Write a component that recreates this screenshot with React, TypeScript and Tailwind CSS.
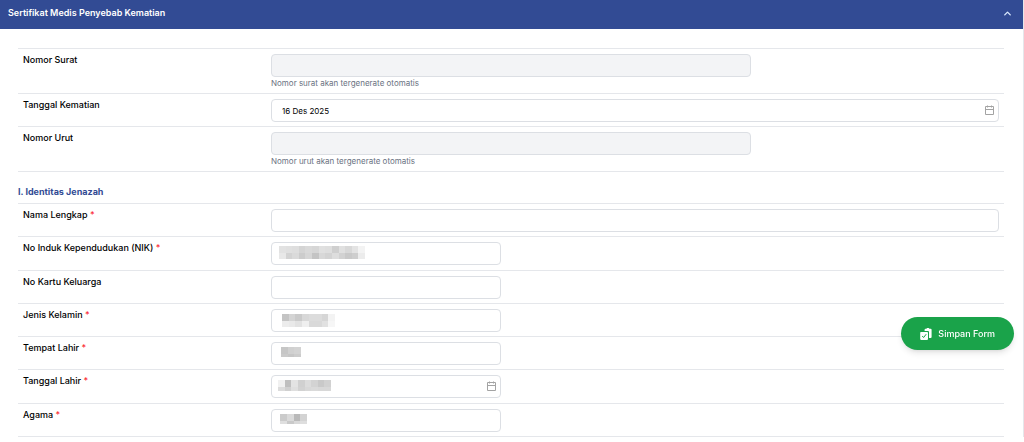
import { useState } from "react";
import { ChevronUp } from "lucide-react";

type Mosaic = { left: number; top: number; width: number; height: number; rows: string[][] };

type Field = {
  id: string;
  label: string;
  required?: boolean;
  date?: boolean;
  value?: string;
  mosaic?: Mosaic;
};

const identityFields: Field[] = [
  {
    id: "nik",
    label: "No Induk Kependudukan (NIK)",
    required: true,
    mosaic: {
      left: 8,
      top: 4,
      width: 86,
      height: 13,
      rows: [
        ["#e2e2e2", "#e0e0e0", "#dedede", "#d4d4d4", "#d9d9d9", "#d6d6d6", "#e0e0e0", "#dedede", "#cfcfcf", "#e0e0e0", "#d8d8d8", "#e3e3e3", "#f3f3f3"],
        ["#e8e8e8", "#d3d3d3", "#dadada", "#cccccc", "#d6d6d6", "#c4c4c4", "#d8d8d8", "#d3d3d3", "#dddddd", "#d2d2d2", "#c9c9c9", "#cecece", "#ececec"],
      ],
    },
  },
  { id: "kk", label: "No Kartu Keluarga" },
  {
    id: "kelamin",
    label: "Jenis Kelamin",
    required: true,
    mosaic: {
      left: 11,
      top: 5,
      width: 53,
      height: 13,
      rows: [
        ["#c4c4c4", "#d4d4d4", "#cacaca", "#d8d8d8", "#dcdcdc", "#dcdcdc", "#d6d6d6", "#f3f3f3"],
        ["#ececec", "#e9e9e9", "#e2e2e2", "#efefef", "#d9d9d9", "#d9d9d9", "#e1e1e1", "#f6f6f6"],
      ],
    },
  },
  {
    id: "tempat",
    label: "Tempat Lahir",
    required: true,
    mosaic: {
      left: 10,
      top: 5,
      width: 20,
      height: 10,
      rows: [
        ["#c6c6c6", "#d0d0d0", "#d3d3d3"],
        ["#cacaca", "#c6c6c6", "#cccccc"],
      ],
    },
  },
  {
    id: "tgl-lahir",
    label: "Tanggal Lahir",
    required: true,
    date: true,
    mosaic: {
      left: 7,
      top: 5,
      width: 53,
      height: 11,
      rows: [
        ["#f1f1f1", "#bfbfbf", "#e3e3e3", "#d0d0d0", "#dcdcdc", "#d3d3d3", "#c9c9c9", "#d1d1d1"],
        ["#dcdcdc", "#d0d0d0", "#dfdfdf", "#d2d2d2", "#d8d8d8", "#dadada", "#d8d8d8", "#d8d8d8"],
      ],
    },
  },
  {
    id: "agama",
    label: "Agama",
    required: true,
    mosaic: {
      left: 9,
      top: 5,
      width: 27,
      height: 10,
      rows: [
        ["#cbcbcb", "#dadada", "#b9b9b9", "#d3d3d3"],
        ["#dfdfdf", "#c9c9c9", "#d9d9d9", "#dedede"],
      ],
    },
  },
];

const inputClass =
  "block h-[23px] w-full rounded border border-[#dcdfe4] bg-white px-2.5 text-[8px] text-black outline-none focus:border-blue-400 disabled:bg-gray-100";

function CalendarIcon() {
  return (
    <svg
      className="pointer-events-none absolute top-1.5 right-1 size-[11px]"
      viewBox="0 0 11 11"
      fill="none"
      stroke="#a3a3a3"
      aria-hidden="true"
    >
      <path d="M1.5 1.5h8v8h-8zM1.5 4.5h8M3.5 0.5v2M7.5 0.5v2" />
    </svg>
  );
}

// masks a personal value; the last row of cells may be cut by the height
function MosaicBlock({ mosaic }: { mosaic: Mosaic }) {
  const { left, top, width, height, rows } = mosaic;
  const cols = rows[0].length;
  return (
    <svg
      className="pointer-events-none absolute"
      style={{ left, top, width, height }}
      viewBox={`0 0 ${cols} ${(cols * height) / width}`}
      shapeRendering="crispEdges"
      aria-hidden="true"
    >
      {rows.map((row, y) =>
        row.map((color, x) => <rect key={`${x}-${y}`} x={x} y={y} width="1" height="1" fill={color} />)
      )}
    </svg>
  );
}

function Row({ field, wide }: { field: Field; wide?: boolean }) {
  return (
    <div className="grid grid-cols-[253px_1fr] items-start border-b border-gray-200 pt-[5px] pr-[5px] pb-1">
      <label htmlFor={field.id} className="pl-[5px] text-[9px] leading-3 font-medium text-black">
        {field.label}
        {field.required && <span className="text-red-500"> *</span>}
      </label>
      <div className={wide ? "relative" : "relative w-[31.6%]"}>
        <input id={field.id} type="text" defaultValue={field.value} className={inputClass} />
        {field.mosaic && <MosaicBlock mosaic={field.mosaic} />}
        {field.date && <CalendarIcon />}
      </div>
    </div>
  );
}

function GeneratedRow({ id, label, hint }: { id: string; label: string; hint: string }) {
  return (
    <div className="grid grid-cols-[253px_1fr] items-start border-b border-gray-200 pt-[5px] pr-[5px] pb-[5px]">
      <label htmlFor={id} className="pl-[5px] text-[9px] leading-3 font-medium text-black">
        {label}
      </label>
      <div className="w-[66%]">
        <input id={id} type="text" disabled className={inputClass} />
        <p className="pt-px text-[8px] leading-[10px] text-gray-500">{hint}</p>
      </div>
    </div>
  );
}

export default function App() {
  const [open, setOpen] = useState(true);

  return (
    <div className="bg-white font-[Inter,sans-serif]">
      <section className="mb-1 border-r border-gray-200">
        <button
          type="button"
          aria-expanded={open}
          onClick={() => setOpen(!open)}
          className="flex h-[29px] w-full items-center justify-between bg-[#324b94] pr-2.5 pb-[3px] pl-2 text-[9px] font-semibold text-white"
        >
          Sertifikat Medis Penyebab Kematian
          <ChevronUp size={11} strokeWidth={3} className={open ? "text-blue-100" : "rotate-180 text-blue-100"} />
        </button>

        {open && (
          <form className="pt-[19px] pr-[19px] pl-[18px]">
            <div className="border-t border-gray-200">
              <GeneratedRow id="nomor-surat" label="Nomor Surat" hint="Nomor surat akan tergenerate otomatis" />
              <Row field={{ id: "tgl-kematian", label: "Tanggal Kematian", value: "16 Des 2025", date: true }} wide />
              <GeneratedRow id="nomor-urut" label="Nomor Urut" hint="Nomor urut akan tergenerate otomatis" />
            </div>

            <h2 className="border-b border-gray-200 pt-[13px] pb-1 text-[9px] leading-[14px] font-bold text-[#324b94]">
              I. Identitas Jenazah
            </h2>
            <div className="grid min-h-[233px] auto-rows-fr">
              <Row field={{ id: "nama", label: "Nama Lengkap", required: true }} wide />
              {identityFields.map((field) => (
                <Row key={field.id} field={field} />
              ))}
            </div>
          </form>
        )}
      </section>

      <button
        type="button"
        className="fixed right-2.5 bottom-[92px] flex h-[33px] items-center gap-1.5 rounded-full bg-[#1aa34a] px-[19px] text-[9px] font-medium text-white shadow-md"
      >
        <svg className="size-3" viewBox="0 0 12 12" aria-hidden="true">
          <path
            d="M4.6 3V1.8a1 1 0 0 1 1-1h.9a1.5 1.5 0 0 1 2.8 0h1.3a1 1 0 0 1 1 1V9a1 1 0 0 1-1 1H9V4a1 1 0 0 0-1-1z"
            fill="white"
          />
          <rect x="0.2" y="3.9" width="7.8" height="8" rx="0.8" fill="white" />
          <path d="M2.2 8l1.4 1.5L6.2 6.2" fill="none" stroke="#1aa34a" />
        </svg>
        Simpan Form
      </button>
    </div>
  );
}
